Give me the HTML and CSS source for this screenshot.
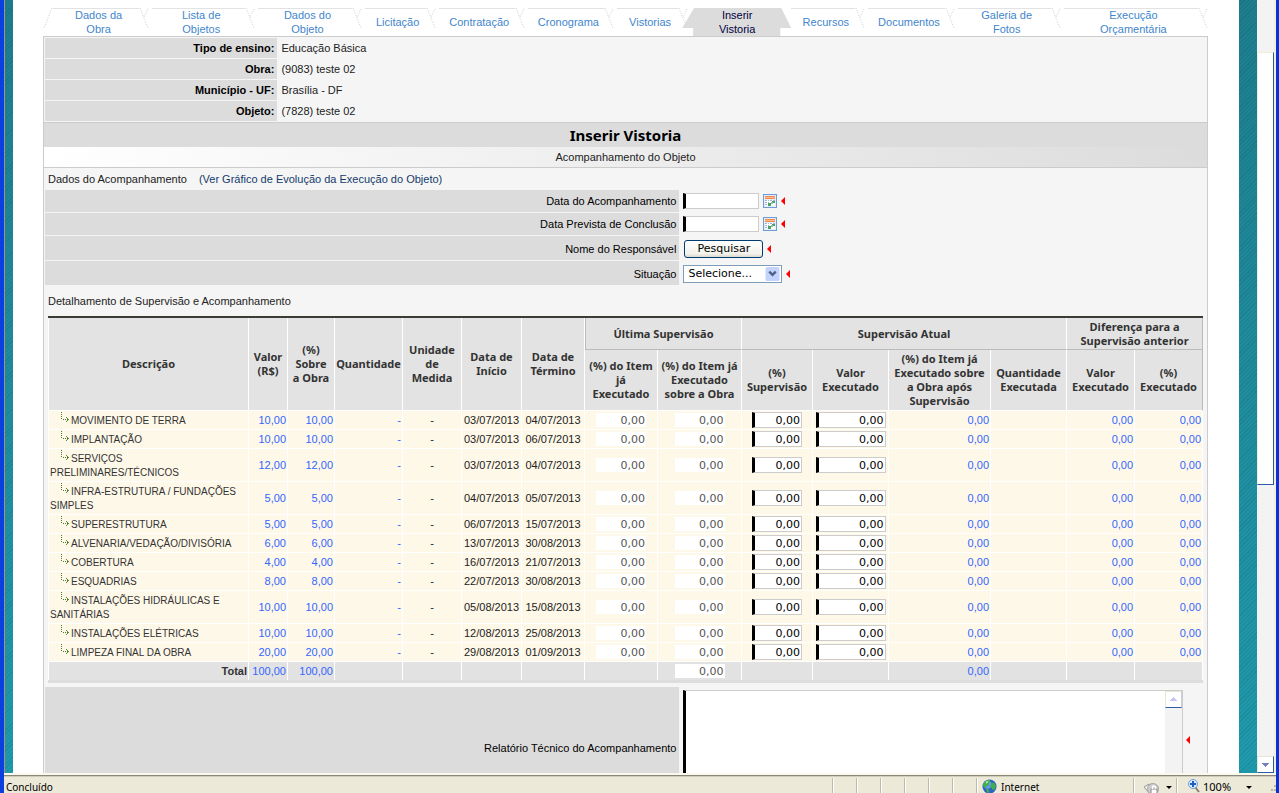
FILE: index.html
```html
<!DOCTYPE html>
<html lang="pt-BR">
<head>
<meta charset="utf-8">
<title>Inserir Vistoria</title>
<link rel="stylesheet" href="styles.css">
</head>
<body>
<svg class="defs" aria-hidden="true">
  <symbol id="branch" viewBox="0 0 8 10"><path d="M.5 0v8M2 7.500h6" stroke="#4a7a2a" stroke-dasharray="1 1" fill="none"/><path d="M5 5h1v1h1v1h1v1H7v1H6v1H5V9h1V8h1V7H6V6H5z" fill="#5d8a3c"/></symbol>
  <symbol id="calendar" viewBox="0 0 14 14"><rect x=".5" y=".5" width="13" height="13" fill="#e4eefb" stroke="#6f9bd6"/><path d="M2 2h10v3H2z" fill="#f58b4b"/><path d="M2 3h10v1H2z" fill="#fbb98c"/><path d="M2 6h10v6H2z" fill="#fff"/><path d="M2 6h2v1H2zm3 0h1v1H5zm2 0h2v1H7zm3 0h2v1h-2zM2 8h2v1H2zm3 0h1v1H5zM2 10h2v1H2z" fill="#9bb4dc"/><path d="M9 7h3v2H9zM5 9h3v3H5z" fill="#4fa060"/><path d="M8 8h2v2H8z" fill="#8cc79a"/></symbol>
</svg>
<div class="window">
  <main class="page">
    <nav class="tabs">
      <a class="tab w0" href="#">Dados da<br>Obra</a>
      <a class="tab w1" href="#">Lista de<br>Objetos</a>
      <a class="tab w1" href="#">Dados do<br>Objeto</a>
      <a class="tab w2" href="#">Licitação</a>
      <a class="tab w3" href="#">Contratação</a>
      <a class="tab w3" href="#">Cronograma</a>
      <a class="tab w2" href="#">Vistorias</a>
      <a class="tab w4 active" href="#" aria-current="page">Inserir<br>Vistoria</a>
      <a class="tab w5" href="#">Recursos</a>
      <a class="tab w3" href="#">Documentos</a>
      <a class="tab w1" href="#">Galeria de<br>Fotos</a>
      <a class="tab w6" href="#">Execução<br>Orçamentária</a>
    </nav>
    <div class="panel">
      <dl class="info">
        <dt>Tipo de ensino:</dt><dd>Educação Básica</dd>
        <dt>Obra:</dt><dd>(9083) teste 02</dd>
        <dt>Município - UF:</dt><dd>Brasília - DF</dd>
        <dt>Objeto:</dt><dd>(7828) teste 02</dd>
      </dl>
      <h1 class="title">Inserir Vistoria</h1>
      <h2 class="subtitle">Acompanhamento do Objeto</h2>
      <p class="section">Dados do Acompanhamento <a class="chart" href="#">(Ver Gráfico de Evolução da Execução do Objeto)</a></p>
      <div class="row">
        <label class="label" for="data">Data do Acompanhamento</label>
        <div class="field"><input class="box date" id="data" type="text"><button class="cal" type="button" aria-label="Calendário"><svg><use href="#calendar"/></svg></button><i class="req"></i></div>
      </div>
      <div class="row">
        <label class="label" for="prev">Data Prevista de Conclusão</label>
        <div class="field"><input class="box date" id="prev" type="text"><button class="cal" type="button" aria-label="Calendário"><svg><use href="#calendar"/></svg></button><i class="req"></i></div>
      </div>
      <div class="row tall">
        <label class="label" for="resp">Nome do Responsável</label>
        <div class="field"><button class="search" id="resp" type="button">Pesquisar</button><i class="req"></i></div>
      </div>
      <div class="row tall">
        <label class="label" for="sit">Situação</label>
        <div class="field"><span class="combo"><select id="sit"><option>Selecione...</option></select><svg class="drop" viewBox="0 0 15 15"><rect width="15" height="15" rx="2" fill="#c3d3fd"/><path d="M4 5l3.500 3.500L11 5" fill="none" stroke="#4d6185" stroke-width="2.500"/></svg></span><i class="req"></i></div>
      </div>
      <p class="section detail">Detalhamento de Supervisão e Acompanhamento</p>
      <table class="grid">
        <colgroup><col class="c1"><col class="c2"><col class="c3"><col class="c4"><col class="c5"><col class="c6"><col class="c7"><col class="c8"><col class="c9"><col class="c10"><col class="c11"><col class="c12"><col class="c11"><col class="c4"><col class="c15"></colgroup>
        <thead>
          <tr class="groups">
            <th rowspan="2">Descrição</th><th rowspan="2">Valor<br>(R$)</th><th rowspan="2">(%)<br>Sobre<br>a Obra</th><th rowspan="2">Quantidade</th><th rowspan="2">Unidade<br>de<br>Medida</th><th rowspan="2">Data de<br>Início</th><th rowspan="2">Data de<br>Término</th>
            <th class="group first" colspan="2">Última Supervisão</th><th class="group" colspan="4">Supervisão Atual</th><th class="group last" colspan="2">Diferença para a<br>Supervisão anterior</th>
          </tr>
          <tr class="heads">
            <th>(%) do Item<br>já<br>Executado</th><th>(%) do Item já<br>Executado<br>sobre a Obra</th><th>(%)<br>Supervisão</th><th>Valor<br>Executado</th><th>(%) do Item já<br>Executado sobre<br>a Obra após<br>Supervisão</th><th>Quantidade<br>Executada</th><th>Valor<br>Executado</th><th class="last">(%)<br>Executado</th>
          </tr>
        </thead>
        <tbody>
          <tr><td><svg class="br"><use href="#branch"/></svg>MOVIMENTO DE TERRA</td><td>10,00</td><td>10,00</td><td>-</td><td>-</td><td>03/07/2013</td><td>04/07/2013</td><td><input class="ro" aria-label="Executado" value="0,00" readonly></td><td><input class="ro" aria-label="Executado sobre a obra" value="0,00" readonly></td><td><input class="box pct" aria-label="Supervisão" value="0,00"></td><td><input class="box val" aria-label="Valor executado" value="0,00"></td><td>0,00</td><td></td><td>0,00</td><td>0,00</td></tr>
          <tr><td><svg class="br"><use href="#branch"/></svg>IMPLANTAÇÃO</td><td>10,00</td><td>10,00</td><td>-</td><td>-</td><td>03/07/2013</td><td>06/07/2013</td><td><input class="ro" aria-label="Executado" value="0,00" readonly></td><td><input class="ro" aria-label="Executado sobre a obra" value="0,00" readonly></td><td><input class="box pct" aria-label="Supervisão" value="0,00"></td><td><input class="box val" aria-label="Valor executado" value="0,00"></td><td>0,00</td><td></td><td>0,00</td><td>0,00</td></tr>
          <tr><td><svg class="br"><use href="#branch"/></svg>SERVIÇOS<br>PRELIMINARES/TÉCNICOS</td><td>12,00</td><td>12,00</td><td>-</td><td>-</td><td>03/07/2013</td><td>04/07/2013</td><td><input class="ro" aria-label="Executado" value="0,00" readonly></td><td><input class="ro" aria-label="Executado sobre a obra" value="0,00" readonly></td><td><input class="box pct" aria-label="Supervisão" value="0,00"></td><td><input class="box val" aria-label="Valor executado" value="0,00"></td><td>0,00</td><td></td><td>0,00</td><td>0,00</td></tr>
          <tr><td><svg class="br"><use href="#branch"/></svg>INFRA-ESTRUTURA / FUNDAÇÕES<br>SIMPLES</td><td>5,00</td><td>5,00</td><td>-</td><td>-</td><td>04/07/2013</td><td>05/07/2013</td><td><input class="ro" aria-label="Executado" value="0,00" readonly></td><td><input class="ro" aria-label="Executado sobre a obra" value="0,00" readonly></td><td><input class="box pct" aria-label="Supervisão" value="0,00"></td><td><input class="box val" aria-label="Valor executado" value="0,00"></td><td>0,00</td><td></td><td>0,00</td><td>0,00</td></tr>
          <tr><td><svg class="br"><use href="#branch"/></svg>SUPERESTRUTURA</td><td>5,00</td><td>5,00</td><td>-</td><td>-</td><td>06/07/2013</td><td>15/07/2013</td><td><input class="ro" aria-label="Executado" value="0,00" readonly></td><td><input class="ro" aria-label="Executado sobre a obra" value="0,00" readonly></td><td><input class="box pct" aria-label="Supervisão" value="0,00"></td><td><input class="box val" aria-label="Valor executado" value="0,00"></td><td>0,00</td><td></td><td>0,00</td><td>0,00</td></tr>
          <tr><td><svg class="br"><use href="#branch"/></svg>ALVENARIA/VEDAÇÃO/DIVISÓRIA</td><td>6,00</td><td>6,00</td><td>-</td><td>-</td><td>13/07/2013</td><td>30/08/2013</td><td><input class="ro" aria-label="Executado" value="0,00" readonly></td><td><input class="ro" aria-label="Executado sobre a obra" value="0,00" readonly></td><td><input class="box pct" aria-label="Supervisão" value="0,00"></td><td><input class="box val" aria-label="Valor executado" value="0,00"></td><td>0,00</td><td></td><td>0,00</td><td>0,00</td></tr>
          <tr><td><svg class="br"><use href="#branch"/></svg>COBERTURA</td><td>4,00</td><td>4,00</td><td>-</td><td>-</td><td>16/07/2013</td><td>21/07/2013</td><td><input class="ro" aria-label="Executado" value="0,00" readonly></td><td><input class="ro" aria-label="Executado sobre a obra" value="0,00" readonly></td><td><input class="box pct" aria-label="Supervisão" value="0,00"></td><td><input class="box val" aria-label="Valor executado" value="0,00"></td><td>0,00</td><td></td><td>0,00</td><td>0,00</td></tr>
          <tr><td><svg class="br"><use href="#branch"/></svg>ESQUADRIAS</td><td>8,00</td><td>8,00</td><td>-</td><td>-</td><td>22/07/2013</td><td>30/08/2013</td><td><input class="ro" aria-label="Executado" value="0,00" readonly></td><td><input class="ro" aria-label="Executado sobre a obra" value="0,00" readonly></td><td><input class="box pct" aria-label="Supervisão" value="0,00"></td><td><input class="box val" aria-label="Valor executado" value="0,00"></td><td>0,00</td><td></td><td>0,00</td><td>0,00</td></tr>
          <tr><td><svg class="br"><use href="#branch"/></svg>INSTALAÇÕES HIDRÁULICAS E<br>SANITÁRIAS</td><td>10,00</td><td>10,00</td><td>-</td><td>-</td><td>05/08/2013</td><td>15/08/2013</td><td><input class="ro" aria-label="Executado" value="0,00" readonly></td><td><input class="ro" aria-label="Executado sobre a obra" value="0,00" readonly></td><td><input class="box pct" aria-label="Supervisão" value="0,00"></td><td><input class="box val" aria-label="Valor executado" value="0,00"></td><td>0,00</td><td></td><td>0,00</td><td>0,00</td></tr>
          <tr><td><svg class="br"><use href="#branch"/></svg>INSTALAÇÕES ELÉTRICAS</td><td>10,00</td><td>10,00</td><td>-</td><td>-</td><td>12/08/2013</td><td>25/08/2013</td><td><input class="ro" aria-label="Executado" value="0,00" readonly></td><td><input class="ro" aria-label="Executado sobre a obra" value="0,00" readonly></td><td><input class="box pct" aria-label="Supervisão" value="0,00"></td><td><input class="box val" aria-label="Valor executado" value="0,00"></td><td>0,00</td><td></td><td>0,00</td><td>0,00</td></tr>
          <tr><td><svg class="br"><use href="#branch"/></svg>LIMPEZA FINAL DA OBRA</td><td>20,00</td><td>20,00</td><td>-</td><td>-</td><td>29/08/2013</td><td>01/09/2013</td><td><input class="ro" aria-label="Executado" value="0,00" readonly></td><td><input class="ro" aria-label="Executado sobre a obra" value="0,00" readonly></td><td><input class="box pct" aria-label="Supervisão" value="0,00"></td><td><input class="box val" aria-label="Valor executado" value="0,00"></td><td>0,00</td><td></td><td>0,00</td><td>0,00</td></tr>
        </tbody>
        <tfoot>
          <tr><td>Total</td><td>100,00</td><td>100,00</td><td></td><td></td><td></td><td></td><td></td><td><input class="ro" aria-label="Total executado" value="0,00" readonly></td><td></td><td></td><td>0,00</td><td></td><td></td><td></td></tr>
        </tfoot>
      </table>
      <div class="row report">
        <label class="label" for="rel">Relatório Técnico do Acompanhamento</label>
        <div class="field"><div class="memo"><textarea id="rel"></textarea><div class="memobar"><span class="up"><svg viewBox="0 0 7 4"><path d="M3 0h1v1h1v1h1v1h1v1H0V3h1V2h1V1h1z" fill="#c5c5f5"/></svg></span></div></div><i class="req"></i></div>
      </div>
    </div>
  </main>
  <div class="scroll"><span class="thumb"></span><span class="down"><svg viewBox="0 0 7 4"><path d="M0 0h7v1H6v1H5v1H4v1H3V3H2V2H1V1H0z" fill="#7b7fc0"/></svg></span></div>
</div>
<footer class="status">
  <span class="msg">Concluído</span>
  <span class="slot"></span><span class="slot"></span><span class="slot"></span><span class="slot"></span><span class="slot"></span><span class="slot"></span>
  <span class="slot zone"><svg class="globe" viewBox="0 0 16 16"><circle cx="8" cy="8" r="7.500" fill="#2c62c4"/><circle cx="6" cy="6" r="4.500" fill="#5f9be8"/><path d="M3 3c3-3 6-2 6-1S7 4 7 6s-3 1-3 3-2-1-3-2 1-3 2-4zM10 4l3 0 2 4-2 4-2-1-2-3zM4 10l3 1 1 3-2 1z" fill="#3fb04a"/><path d="M4 3l3-1-2 3z" fill="#d9f2d0"/></svg>Internet</span>
  <span class="slot guard"><svg class="shield" viewBox="0 0 16 16"><path d="M4 7a6 5 0 0 1 11 1" fill="none" stroke="#9a9a9a" stroke-width="2"/><path d="M1 7l5-3v9z" fill="#eee" stroke="#999"/><circle cx="10" cy="9" r="5.500" fill="#cfcfcf" stroke="#aaa"/><rect x="8" y="9" width="6" height="5" fill="#fff" stroke="#888"/><path d="M9.500 9V7.500a1.500 1.500 0 0 1 3 0V9" fill="none" stroke="#fff" stroke-width="1.500"/></svg><i class="caret"></i></span>
  <span class="slot zoom"><svg class="lens" viewBox="0 0 12 14"><path d="M7 8l4 5" stroke="#8a7a6a" stroke-width="2"/><circle cx="5" cy="5" r="4.500" fill="#dbeafb" stroke="#6b9bd8"/><path d="M4 2h2v2h2v2H6v2H4V6H2V4h2z" fill="#1c5fc4"/></svg><span class="level">100%</span><i class="caret"></i></span>
  <svg class="grip" viewBox="0 0 8 10"><path d="M6 1h2v2H6zM3 5h2v2H3zM6 5h2v2H6zM0 9h2v2H0zM3 9h2v2H3zM6 9h2v2H6z" fill="#b8b4a2"/></svg>
</footer>
</body>
</html>
```
FILE: styles.css
```css
* { box-sizing: border-box; }
body {
  margin: 0; height: 100vh; overflow: hidden;
  display: flex; flex-direction: column;
  font: 11px/14px "Liberation Sans", Arial, sans-serif; color: #222;
  border-left: 4px solid #0a3fe0; border-right: 3px solid #0831d9;
  background: #ece9d8;
}
.defs { position: absolute; width: 0; height: 0; }
a { text-decoration: none; }
button, input, select, textarea { font: 11px/14px "DejaVu Sans", Verdana, sans-serif; color: #000; margin: 0; }

.window {
  flex: 1; min-height: 0; display: flex; overflow: hidden;
  border-left: 1px solid #9c968a;
  background:
    repeating-linear-gradient(135deg, rgba(0,40,60,.1) 0 1px, transparent 1px 3px),
    linear-gradient(#1d7d8d, #1f8a9a 40%, #1f9aac);
}
.page { flex: 1; min-width: 0; margin: 0 18px 0 8px; padding: 8px 31px 0 30px; background: #fff; }

.tabs { display: flex; height: 28px; padding-right: 1px; }
.tab {
  position: relative; display: flex; align-items: center; justify-content: center;
  text-align: center; color: #3f86cc;
}
.tab::before { content: ""; position: absolute; top: 0; left: 4px; right: 9px; border-top: 1px solid #e2e2e2; }
.tab::after {
  content: ""; position: absolute; top: 0; right: -4px; width: 13px; height: 20px;
  background: url("data:image/svg+xml,%3Csvg xmlns='http://www.w3.org/2000/svg' width='13' height='20'%3E%3Cpath d='M1 0l8 20M9 1l-4 8' stroke='%23ccc' stroke-dasharray='1 1.500' fill='none'/%3E%3C/svg%3E") no-repeat;
}
.tab:first-child { padding-left: 6px; }
.tab:first-child::before {
  left: 0; height: 20px; border: 0;
  background:
    url("data:image/svg+xml,%3Csvg xmlns='http://www.w3.org/2000/svg' width='10' height='20'%3E%3Cpath d='M9 0L1 20' stroke='%23ccc' stroke-dasharray='1 1.500' fill='none'/%3E%3C/svg%3E") no-repeat,
    linear-gradient(#e2e2e2, #e2e2e2) 10px 0 / 100% 1px no-repeat;
}
.w0 { flex: 99 1 0; }
.w1 { flex: 106 1 0; } .w2 { flex: 74 1 0; } .w3 { flex: 89 1 0; }
.w4 { flex: 100 1 0; } .w5 { flex: 77 1 0; } .w6 { flex: 147 1 0; }
.active { color: #000040; z-index: 1; }
.active::before { left: -5px; right: -4px; height: 28px; border: 0; background: #dcdcdc; z-index: -1; clip-path: polygon(12px 0, calc(100% - 10px) 0, 100% 20px, calc(100% - 11px) 20px, calc(100% - 11px) 100%, 11px 100%, 11px 20px, 0 20px); }
.active::after { display: none; }

.panel { border: 1px solid #ccc; background: #f5f5f5; }
.info { margin: 0; padding: 1px 0 0 1px; display: grid; grid-template-columns: 20% 1fr; row-gap: 1px; }
.info dt { background: #dcdcdc; text-align: right; font-weight: bold; color: #000; padding: 3px; }
.info dd { margin: 0; padding: 3px 4px; }
.title {
  margin: 1px 0 0; border-top: 1px solid #ccc; background: #dcdcdc; height: 25px;
  font: bold 15px/25px "Noto Sans", Tahoma, sans-serif; color: #000; text-align: center;
}
.subtitle {
  margin: 0; border-bottom: 1px solid #ccc; text-align: center;
  font-size: 11px; font-weight: normal; line-height: 20px;
  background: linear-gradient(90deg, #fff, #dcdcdc);
}
.section { margin: 0; padding: 4px; }
.chart { margin-left: 9px; color: #133a6b; }

.row { display: flex; min-height: 23px; margin-left: 1px; }
.row.tall { min-height: 25px; }
.label {
  flex: 0 0 54.6%; display: flex; align-items: center; justify-content: flex-end;
  padding-right: 3px; background: #dcdcdc; border-bottom: 1px solid #f5f5f5; color: #000;
}
.tall .label { padding-top: 1px; }
.field { flex: 1; display: flex; align-items: center; padding: 0 0 1px 4px; }
.box { border: 1px solid #ccc; border-left: 3px solid #000; border-radius: 0; background: #fff; height: 16px; padding: 0 1px; }
.date { width: 76px; }
.cal { width: 14px; height: 14px; margin-left: 4px; padding: 0; border: 0; background: none; }
.cal svg { display: block; width: 14px; height: 14px; }
.req { width: 0; height: 0; margin-left: 4px; border: 4px solid transparent; border-left: 0; border-right: 4px solid #f00; }
.search {
  width: 79px; height: 18px; margin-left: 1px; padding: 0; line-height: 14px;
  border: 1px solid #003c74; border-radius: 3px; background: linear-gradient(#fff, #f2f1ea 80%, #dcd8cc);
}
.tall .field { padding-bottom: 0; }
.combo { position: relative; display: block; }
.combo select { appearance: none; display: block; width: 99px; height: 18px; padding: 0 0 0 4px; border: 1px solid #7f9db9; border-radius: 0; background: #fff; }
.drop { position: absolute; top: 2px; right: 2px; width: 15px; height: 14px; pointer-events: none; }
.detail { padding: 8px 4px; }

.grid {
  width: calc(100% - 8px); margin: 0 4px; table-layout: fixed;
  border-collapse: separate; border-spacing: 0;
  border-top: 2px solid #3a3d35; border-bottom: 3px solid #ddd; background: #fff;
}
.c1 { width: 201px; } .c2 { width: 39px; } .c3 { width: 47px; } .c4 { width: 68px; } .c5 { width: 59px; }
.c6 { width: 60px; } .c7 { width: 63px; } .c8 { width: 73px; } .c9 { width: 84px; } .c10 { width: 71px; }
.c11 { width: 76px; } .c12 { width: 102px; } .c15 { width: 68px; }
.grid th {
  padding: 0; background: #e3e3e3; border-right: 1px solid #fff; border-bottom: 1px solid #fff;
  font: bold 11px/14px "Noto Sans", Tahoma, sans-serif; color: #333;
}
.grid th:first-child, .grid td:first-child { border-left: 1px solid #fff; }
.grid .heads th:first-child { border-left: 0; }
.grid .groups .group { height: 32px; border-bottom-color: #bbb; }
.grid .groups .first { border-left: 1px solid #bbb; }
.grid .heads th { height: 61px; }
.grid th.last { border-right-color: #bbb; }
.grid td {
  padding: 2px 1px; text-align: right; color: #36f; background: #fef8e8;
  border-right: 1px solid #fff; border-bottom: 1px solid #fff;
}
.grid td:nth-child(1) { text-align: left; color: #333; white-space: nowrap; }
.grid tbody td:nth-child(1) { padding: 3px 1px 1px; font-size: 10px; }
.grid td:nth-child(n+5):nth-child(-n+7) { text-align: center; color: #222; }
.grid td:nth-child(n+8):nth-child(-n+11) { padding: 1px 0; }
.grid tfoot td { background: #e2e2e2; border-bottom: 0; height: 18px; }
.grid tfoot td:first-child { text-align: right; font-weight: bold; }
.br { width: 8px; height: 10px; margin: -4px 2px 0 11px; vertical-align: 2px; }
.grid input { display: block; margin: 0 auto; text-align: right; }
.ro { width: 50px; height: 14px; padding: 1px 1px 0; border: 0; background: #fff; color: #555; }
.pct { width: 50px; }
.val { width: 70px; }

.report { margin-top: 4px; height: 122px; }
.memo { display: flex; width: 500px; height: 116px; border: 1px solid #ccc; border-left: 3px solid #000; background: #fff; }
.memo textarea { flex: 1; border: 0; padding: 2px; resize: none; outline: 0; background: #fff; }
.memobar { width: 17px; background: #f3f3f3; }
.up, .down { display: flex; align-items: center; justify-content: center; height: 17px; background: #fff; }
.up { border: 1px solid #e9e6d6; border-right-color: #ccd; border-bottom-color: #2d5aa5; }
.up svg, .down svg { width: 7px; height: 4px; }
.report .req { margin-bottom: 16px; margin-left: 3px; }

.scroll {
  flex: 0 0 19px; display: flex; flex-direction: column; padding-top: 52px;
  background: #f3f3f3; border-right: 2px solid #f0eedf;
}
.thumb { height: 60%; border: 1px solid #f1ecd8; border-right-color: #2d5aa5; border-bottom-color: #2d5aa5; background: #fff; }
.down { margin-top: auto; border: 1px solid #e9e6d6; border-right: 1px solid #2d5aa5; border-bottom: 1px solid #2d5aa5; }

.status {
  flex: 0 0 20px; display: flex; align-items: flex-start; overflow: hidden;
  border-top: 2px solid #fbf9ee; box-shadow: inset 0 1px #8a887c, inset 0 2px #cfccba;
  background: #ece9d8; color: #000; font: 10px/12px "Noto Sans", Tahoma, sans-serif;
}
.msg { flex: 1; padding: 6px 2px 0; }
.slot { display: flex; flex: 0 0 24px; height: 15px; margin-top: 3px; padding-top: 3px; border-left: 1px solid #bdb9a8; box-shadow: inset 1px 0 #fff; }
.zone { flex-basis: 157px; padding-left: 5px; }
.globe { width: 15px; height: 15px; margin: -2px 4px 0 0; }
.guard { flex-basis: 43px; padding-left: 9px; }
.shield { width: 16px; height: 16px; margin: -1px 7px 0 0; }
.zoom { flex-basis: 92px; padding-left: 11px; }
.lens { width: 12px; height: 14px; margin: -2px 3px 0 0; }
.level { flex: 0 0 43px; font-size: 11px; }
.caret { width: 0; height: 0; margin-top: 5px; border: 3px solid transparent; border-bottom: 0; border-top-color: #000; }
.grip { width: 8px; height: 10px; margin-top: 9px; }
```
